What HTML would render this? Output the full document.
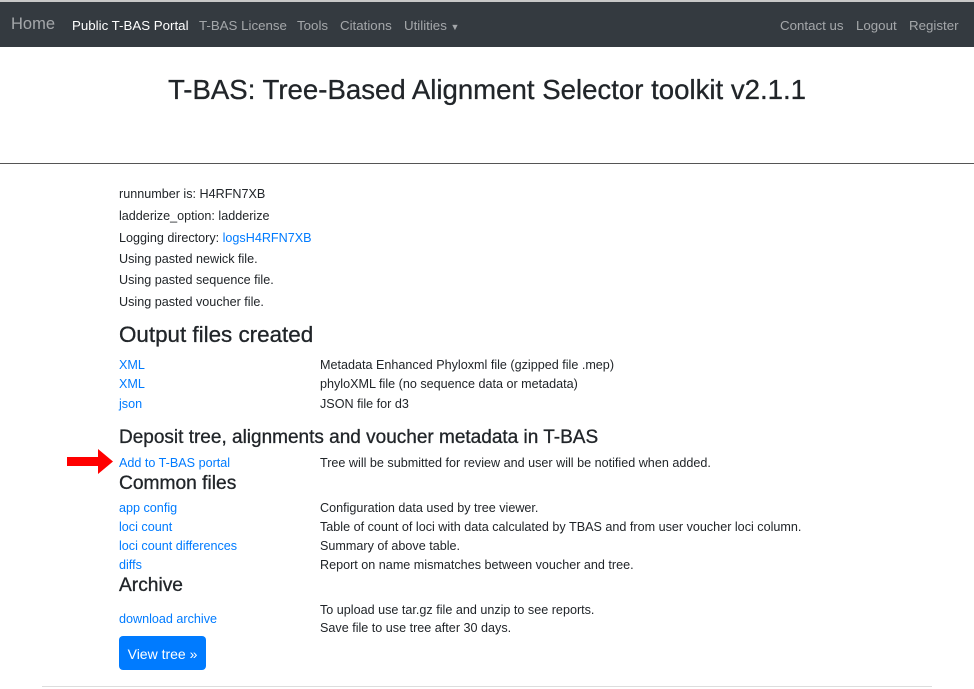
<!DOCTYPE html>
<html><head><style>
body{margin:0;width:974px;height:689px;overflow:hidden;background:#fff;font-family:"Liberation Sans",sans-serif;color:#212529;position:relative}
.a{position:absolute;white-space:nowrap}
.nav{position:absolute;left:0;top:2px;width:974px;height:45px;background:#343a40}
.top{position:absolute;left:0;top:0;width:974px;height:2px;background:#c8c8c8}
.n{position:absolute;top:16px;font-size:13.3px;color:rgba(255,255,255,.55)}
.t{font-size:12.6px}
.l{color:#007bff}
</style></head><body>
<div class="top"></div>
<div class="nav">
<span class="n" style="left:11px;top:13px;font-size:16.5px">Home</span>
<span class="n" style="left:72px;color:#fff">Public T-BAS Portal</span>
<span class="n" style="left:199px">T-BAS License</span>
<span class="n" style="left:297px">Tools</span>
<span class="n" style="left:340px">Citations</span>
<span class="n" style="left:404px">Utilities <span style="font-size:9px">▼</span></span>
<span class="n" style="left:780px">Contact us</span>
<span class="n" style="left:856px">Logout</span>
<span class="n" style="left:909px">Register</span>
</div>
<div class="a" style="left:0;width:974px;top:74px;text-align:center;font-size:27.6px;-webkit-text-stroke:0.3px #212529">T-BAS: Tree-Based Alignment Selector toolkit v2.1.1</div>
<div class="a" style="left:0;top:163px;width:974px;height:1px;background:#555"></div>
<div class="a t" style="left:119px;top:187px">runnumber is: H4RFN7XB</div>
<div class="a t" style="left:119px;top:209px">ladderize_option: ladderize</div>
<div class="a t" style="left:119px;top:231px">Logging directory: <span class="l">logsH4RFN7XB</span></div>
<div class="a t" style="left:119px;top:252px">Using pasted newick file.</div>
<div class="a t" style="left:119px;top:273px">Using pasted sequence file.</div>
<div class="a t" style="left:119px;top:295px">Using pasted voucher file.</div>
<div class="a" style="left:119px;top:322px;font-size:22.4px;-webkit-text-stroke:0.3px #212529">Output files created</div>
<div class="a t l" style="left:119px;top:358px">XML</div><div class="a t" style="left:320px;top:358px">Metadata Enhanced Phyloxml file (gzipped file .mep)</div>
<div class="a t l" style="left:119px;top:377px">XML</div><div class="a t" style="left:320px;top:377px">phyloXML file (no sequence data or metadata)</div>
<div class="a t l" style="left:119px;top:397px">json</div><div class="a t" style="left:320px;top:397px">JSON file for d3</div>
<div class="a" style="left:119px;top:427px;font-size:19px;-webkit-text-stroke:0.3px #212529">Deposit tree, alignments and voucher metadata in T-BAS</div>
<svg class="a" style="left:67px;top:449px" width="47" height="25"><polygon points="0,8 31,8 31,0 46,12.5 31,25 31,17 0,17" fill="#f00"/></svg>
<div class="a t l" style="left:119px;top:456px">Add to T-BAS portal</div><div class="a t" style="left:320px;top:456px">Tree will be submitted for review and user will be notified when added.</div>
<div class="a" style="left:119px;top:473px;font-size:19.2px;-webkit-text-stroke:0.3px #212529">Common files</div>
<div class="a t l" style="left:119px;top:501px">app config</div><div class="a t" style="left:320px;top:501px">Configuration data used by tree viewer.</div>
<div class="a t l" style="left:119px;top:520px">loci count</div><div class="a t" style="left:320px;top:520px">Table of count of loci with data calculated by TBAS and from user voucher loci column.</div>
<div class="a t l" style="left:119px;top:539px">loci count differences</div><div class="a t" style="left:320px;top:539px">Summary of above table.</div>
<div class="a t l" style="left:119px;top:558px">diffs</div><div class="a t" style="left:320px;top:558px">Report on name mismatches between voucher and tree.</div>
<div class="a" style="left:119px;top:575px;font-size:19.2px;-webkit-text-stroke:0.3px #212529">Archive</div>
<div class="a t l" style="left:119px;top:612px">download archive</div>
<div class="a t" style="left:320px;top:603px">To upload use tar.gz file and unzip to see reports.</div>
<div class="a t" style="left:320px;top:621px">Save file to use tree after 30 days.</div>
<div class="a" style="left:119px;top:636px;width:87px;height:34px;background:#007bff;border-radius:4px;color:#fff;font-size:14px;line-height:36px;text-align:center">View tree »</div>
<div class="a" style="left:42px;top:686px;width:890px;height:1px;background:#ddd"></div>
</body></html>
